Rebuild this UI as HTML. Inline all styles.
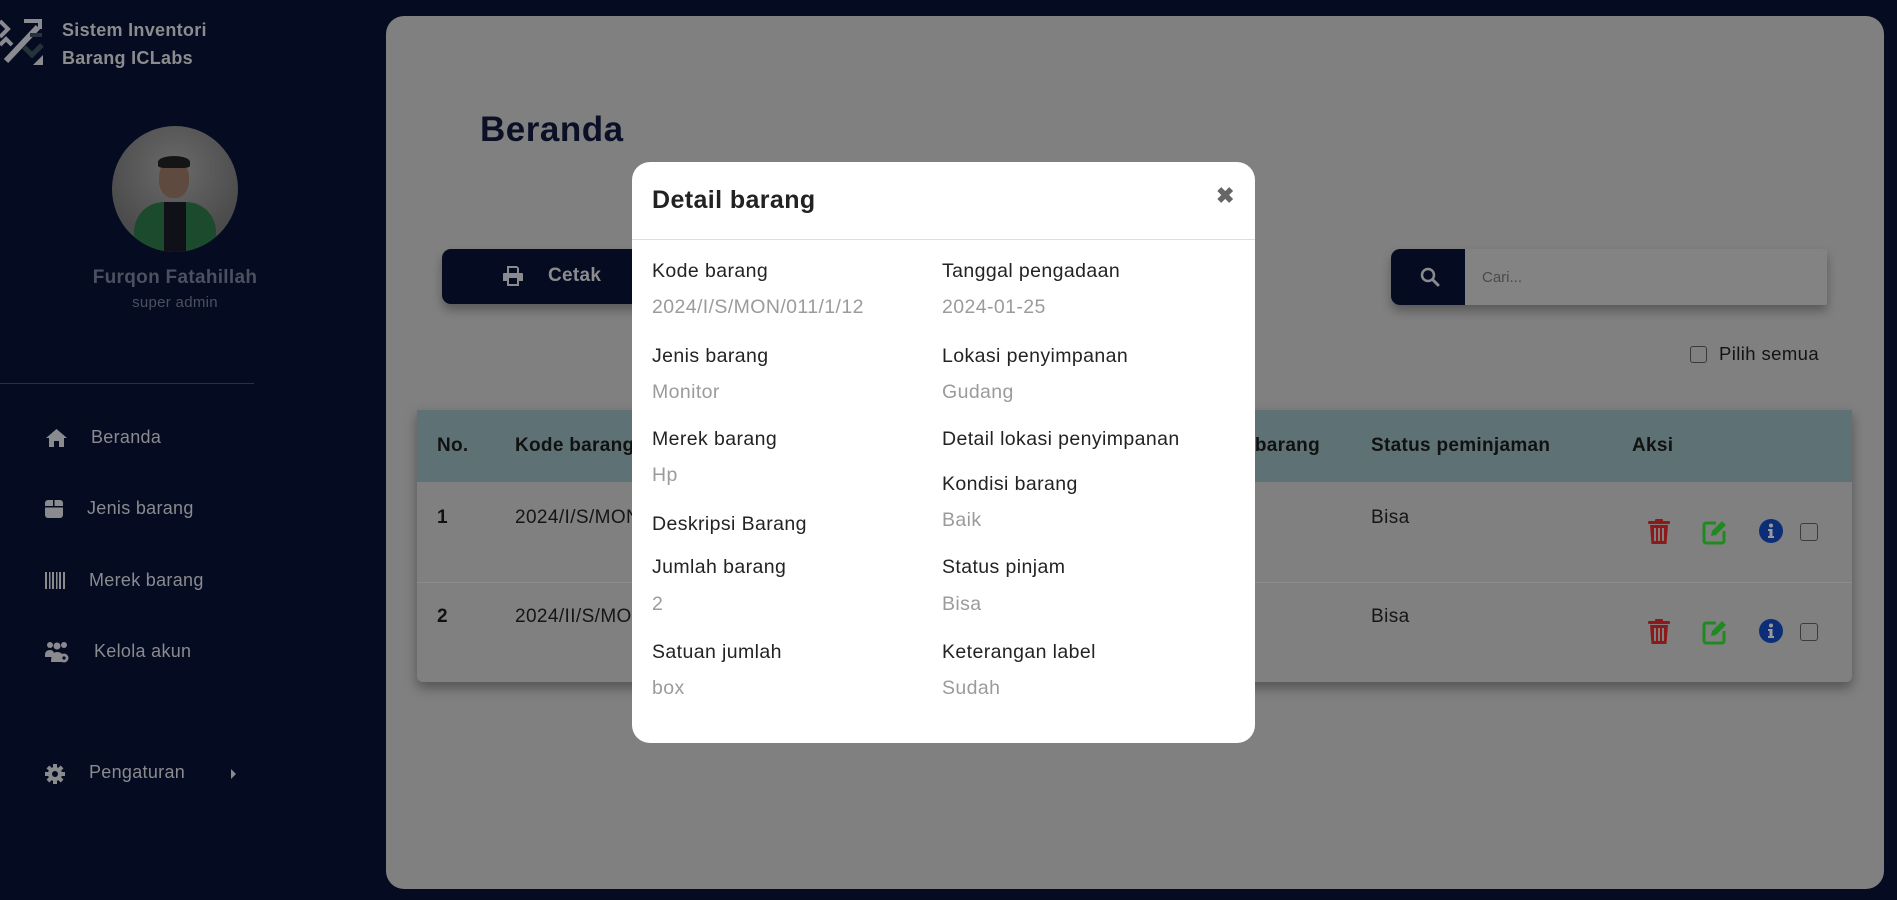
<!DOCTYPE html>
<html><head><meta charset="utf-8"><style>
*{margin:0;padding:0;box-sizing:border-box}
body{width:1897px;height:900px;background:#050b21;font-family:"Liberation Sans",sans-serif;position:relative;overflow:hidden}
.a{position:absolute;white-space:nowrap}
.side{color:#8a8b8f;font-size:18px;letter-spacing:.3px}
.lbl{color:#232323;font-size:19.5px;letter-spacing:.4px}
.val{color:#9b9b9b;font-size:19.5px;letter-spacing:.4px}
.th{font-weight:bold;font-size:19px;color:#111;letter-spacing:.3px}
.td{font-size:19px;color:#151515;letter-spacing:.4px}
</style></head><body>
<!-- logo -->
<svg class="a" style="left:0;top:17px" width="44" height="50" viewBox="0 0 44 50">
<path d="M0 4 L8 12 L0 20" fill="none" stroke="#8a8b90" stroke-width="4"/>
<path d="M0 28 L6 22 L12 28" fill="none" stroke="#8a8b90" stroke-width="4"/>
<path d="M38 10 L6 44" stroke="#8a8b90" stroke-width="6"/>
<path d="M24 4 L40 4 L40 12" fill="none" stroke="#8a8b90" stroke-width="4"/>
<path d="M24 30 L32 38 L42 28" fill="none" stroke="#24343a" stroke-width="5"/>
<path d="M30 18 L42 18" stroke="#24343a" stroke-width="4"/>
<path d="M43 38 L43 48 L33 48Z" fill="#8a8b90"/>
</svg>
<div class="a" style="left:62px;top:16px;color:#8c8c8f;font-weight:bold;font-size:18px;line-height:28px;letter-spacing:.3px">Sistem Inventori<br>Barang ICLabs</div>
<!-- avatar -->
<div class="a" style="left:112px;top:126px;width:126px;height:126px;border-radius:50%;background:radial-gradient(circle at 50% 35%,#6a6a6a,#4b4b4b 70%);overflow:hidden">
<div class="a" style="left:47px;top:34px;width:30px;height:38px;border-radius:45%;background:#5e4a3e"></div>
<div class="a" style="left:46px;top:30px;width:32px;height:12px;border-radius:50% 50% 20% 20%;background:#151515"></div>
<div class="a" style="left:22px;top:76px;width:82px;height:60px;border-radius:30px 30px 0 0;background:#1c4a2c"></div>
<div class="a" style="left:52px;top:76px;width:22px;height:60px;background:#0f1018"></div>
</div>
<div class="a" style="left:0;width:350px;text-align:center;top:267px;color:#4d5060;font-weight:bold;font-size:19px;letter-spacing:.3px">Furqon Fatahillah</div>
<div class="a" style="left:0;width:350px;text-align:center;top:294px;color:#4d5060;font-size:15px;letter-spacing:.3px">super admin</div>
<div class="a" style="left:0;top:383px;width:254px;height:1px;background:#2b3045"></div>
<!-- menu -->
<svg class="a" style="left:45px;top:428px" width="23" height="20" viewBox="0 0 23 20"><path d="M11.5 1 L22 10 L19 10 L19 19 L14 19 L14 13 L9 13 L9 19 L4 19 L4 10 L1 10Z" fill="#8a8b8f"/></svg>
<div class="a side" style="left:91px;top:427px">Beranda</div>
<svg class="a" style="left:45px;top:500px" width="18" height="18"><rect x="0" y="0" width="18" height="18" rx="3" fill="#8a8b8f"/><rect x="0" y="6" width="18" height="1.5" fill="#050b21"/><rect x="8" y="0" width="1.5" height="6" fill="#050b21"/></svg>
<div class="a side" style="left:87px;top:498px">Jenis barang</div>
<svg class="a" style="left:45px;top:572px" width="20" height="17"><g fill="#8a8b8f"><rect x="0" width="2" height="17"/><rect x="4" width="1.5" height="17"/><rect x="7" width="2" height="17"/><rect x="11" width="1.5" height="17"/><rect x="14" width="2" height="17"/><rect x="18" width="2" height="17"/></g></svg>
<div class="a side" style="left:89px;top:570px">Merek barang</div>
<svg class="a" style="left:45px;top:641px" width="25" height="22" viewBox="0 0 25 22"><g fill="#8a8b8f"><circle cx="5" cy="4" r="3"/><circle cx="12" cy="5" r="3.5"/><circle cx="19" cy="4" r="3"/><path d="M0 14 Q0 9 5 9 Q9 9 9 13 L9 16 L0 16Z"/><path d="M6 21 Q6 11 12 11 Q17 11 18 15 L18 21Z"/><circle cx="19" cy="17" r="4.5"/></g><circle cx="19" cy="17" r="1.6" fill="#050b21"/></svg>
<div class="a side" style="left:94px;top:641px">Kelola akun</div>
<svg class="a" style="left:45px;top:764px" width="20" height="20" viewBox="0 0 20 20"><g fill="#8a8b8f"><circle cx="10" cy="10" r="7"/><rect x="8" y="0" width="4" height="20"/><rect x="0" y="8" width="20" height="4"/><rect x="8" y="0" width="4" height="20" transform="rotate(45 10 10)"/><rect x="8" y="0" width="4" height="20" transform="rotate(-45 10 10)"/></g><circle cx="10" cy="10" r="3" fill="#050b21"/></svg>
<div class="a side" style="left:89px;top:762px">Pengaturan</div>
<svg class="a" style="left:231px;top:769px" width="6" height="10"><path d="M0 0L5 5L0 10Z" fill="#8a8b8f"/></svg>
<!-- main panel -->
<div class="a" style="left:386px;top:16px;width:1498px;height:873px;border-radius:18px;background:#808080"></div>
<div class="a" style="left:480px;top:110px;font-size:35px;font-weight:bold;color:#0b1026;letter-spacing:.5px">Beranda</div>
<div class="a" style="left:442px;top:249px;width:240px;height:55px;border-radius:9px;background:#050b21;box-shadow:0 6px 10px rgba(0,0,0,.3)"></div>
<svg class="a" style="left:503px;top:266px" width="20" height="20" viewBox="0 0 20 20"><path fill="#8a8b8f" d="M4 0h10l2 2v5H4Z M1 7h18a1 1 0 0 1 1 1v7h-4v5H4v-5H0V8a1 1 0 0 1 1-1Z"/><rect x="6" y="12" width="8" height="6" fill="#050b21"/><rect x="6" y="2" width="8" height="5" fill="#050b21"/></svg>
<div class="a" style="left:548px;top:265px;color:#8c8c8f;font-weight:bold;font-size:19px;letter-spacing:.3px">Cetak</div>
<!-- search -->
<div class="a" style="left:1391px;top:249px;width:436px;height:56px;border-radius:9px 2px 2px 9px;background:#838383;box-shadow:0 6px 10px rgba(0,0,0,.3);overflow:hidden"><div style="width:74px;height:56px;background:#050b21"></div></div>
<svg class="a" style="left:1420px;top:267px" width="20" height="20" viewBox="0 0 20 20"><circle cx="8" cy="8" r="6" fill="none" stroke="#8a8b8f" stroke-width="2.5"/><path d="M12.5 12.5L18 18" stroke="#8a8b8f" stroke-width="3" stroke-linecap="round"/></svg>
<div class="a" style="left:1482px;top:269px;color:#4a4a4a;font-size:15px">Cari...</div>
<div class="a" style="left:1690px;top:346px;width:17px;height:17px;border:1.5px solid #3a3a3a;border-radius:3px"></div>
<div class="a" style="left:1719px;top:343px;color:#131313;font-size:18.5px;letter-spacing:.4px">Pilih semua</div>
<!-- table -->
<div class="a" style="left:417px;top:409px;width:1435px;height:273px;border-radius:0 0 6px 6px;background:#808080;box-shadow:0 6px 12px rgba(0,0,0,.35);overflow:hidden">
<div style="height:73px;background:#5e7276;border-top:1px solid #6d8185"></div>
<div style="position:absolute;top:173px;left:0;width:100%;height:1px;background:#8c8c8c"></div>
</div>
<div class="a th" style="left:437px;top:435px">No.</div>
<div class="a th" style="left:515px;top:435px">Kode barang</div>
<div class="a th" style="left:1140px;width:180px;text-align:right;top:435px">Status barang</div>
<div class="a th" style="left:1371px;top:435px">Status peminjaman</div>
<div class="a th" style="left:1632px;top:435px">Aksi</div>
<div class="a th" style="left:437px;top:507px">1</div>
<div class="a td" style="left:515px;top:507px">2024/I/S/MON/011/1/12</div>
<div class="a td" style="left:1371px;top:507px">Bisa</div>
<div class="a th" style="left:437px;top:606px">2</div>
<div class="a td" style="left:515px;top:606px">2024/II/S/MON/011/1/12</div>
<div class="a td" style="left:1371px;top:606px">Bisa</div>
<!-- action icons -->
<svg width="0" height="0" style="position:absolute"><defs>
<g id="tr"><rect x="0" y="2" width="22" height="3" rx="1" fill="#8c1a1a"/><rect x="7" y="0" width="8" height="3" rx="1" fill="#8c1a1a"/><path d="M2 6h18l-1.5 19h-15Z" fill="#8c1a1a"/><g fill="#808080"><rect x="6" y="9" width="2" height="13"/><rect x="10" y="9" width="2" height="13"/><rect x="14" y="9" width="2" height="13"/></g></g>
<g id="ed"><path d="M14 4H4a2 2 0 0 0-2 2v16a2 2 0 0 0 2 2h16a2 2 0 0 0 2-2V12" fill="none" stroke="#1f8a1f" stroke-width="3"/><path d="M9 17l1-5L20 2l4 4-10 10Z" fill="#1f8a1f"/></g>
<g id="in"><circle cx="12" cy="12" r="12" fill="#0c2e78"/><circle cx="12" cy="6.5" r="2" fill="#9a9a9a"/><path d="M9 10h4.5v7H15v2H9v-2h1.5v-5H9Z" fill="#9a9a9a"/></g>
</defs></svg>
<svg class="a" style="left:1648px;top:519px" width="22" height="26"><use href="#tr"/></svg>
<svg class="a" style="left:1702px;top:519px" width="26" height="26"><use href="#ed"/></svg>
<svg class="a" style="left:1759px;top:519px" width="24" height="24"><use href="#in"/></svg>
<div class="a" style="left:1800px;top:523px;width:18px;height:18px;border:1.5px solid #3c3c3c;border-radius:3px"></div>
<svg class="a" style="left:1648px;top:619px" width="22" height="26"><use href="#tr"/></svg>
<svg class="a" style="left:1702px;top:619px" width="26" height="26"><use href="#ed"/></svg>
<svg class="a" style="left:1759px;top:619px" width="24" height="24"><use href="#in"/></svg>
<div class="a" style="left:1800px;top:623px;width:18px;height:18px;border:1.5px solid #3c3c3c;border-radius:3px"></div>
<!-- modal -->
<div class="a" style="left:632px;top:162px;width:623px;height:581px;background:#fff;border-radius:18px">
<div style="height:78px;border-bottom:1px solid #dedede"></div>
</div>
<div class="a" style="left:652px;top:186px;font-size:25px;font-weight:bold;color:#222;letter-spacing:.4px">Detail barang</div>
<div class="a" style="left:1216px;top:183px;font-size:22px;font-weight:bold;color:#666">&#x2716;</div>
<div class="a lbl" style="left:652px;top:260px">Kode barang</div>
<div class="a val" style="left:652px;top:296px">2024/I/S/MON/011/1/12</div>
<div class="a lbl" style="left:652px;top:345px">Jenis barang</div>
<div class="a val" style="left:652px;top:381px">Monitor</div>
<div class="a lbl" style="left:652px;top:428px">Merek barang</div>
<div class="a val" style="left:652px;top:464px">Hp</div>
<div class="a lbl" style="left:652px;top:513px">Deskripsi Barang</div>
<div class="a lbl" style="left:652px;top:556px">Jumlah barang</div>
<div class="a val" style="left:652px;top:593px">2</div>
<div class="a lbl" style="left:652px;top:641px">Satuan jumlah</div>
<div class="a val" style="left:652px;top:677px">box</div>
<div class="a lbl" style="left:942px;top:260px">Tanggal pengadaan</div>
<div class="a val" style="left:942px;top:296px">2024-01-25</div>
<div class="a lbl" style="left:942px;top:345px">Lokasi penyimpanan</div>
<div class="a val" style="left:942px;top:381px">Gudang</div>
<div class="a lbl" style="left:942px;top:428px">Detail lokasi penyimpanan</div>
<div class="a lbl" style="left:942px;top:473px">Kondisi barang</div>
<div class="a val" style="left:942px;top:509px">Baik</div>
<div class="a lbl" style="left:942px;top:556px">Status pinjam</div>
<div class="a val" style="left:942px;top:593px">Bisa</div>
<div class="a lbl" style="left:942px;top:641px">Keterangan label</div>
<div class="a val" style="left:942px;top:677px">Sudah</div>
</body></html>
